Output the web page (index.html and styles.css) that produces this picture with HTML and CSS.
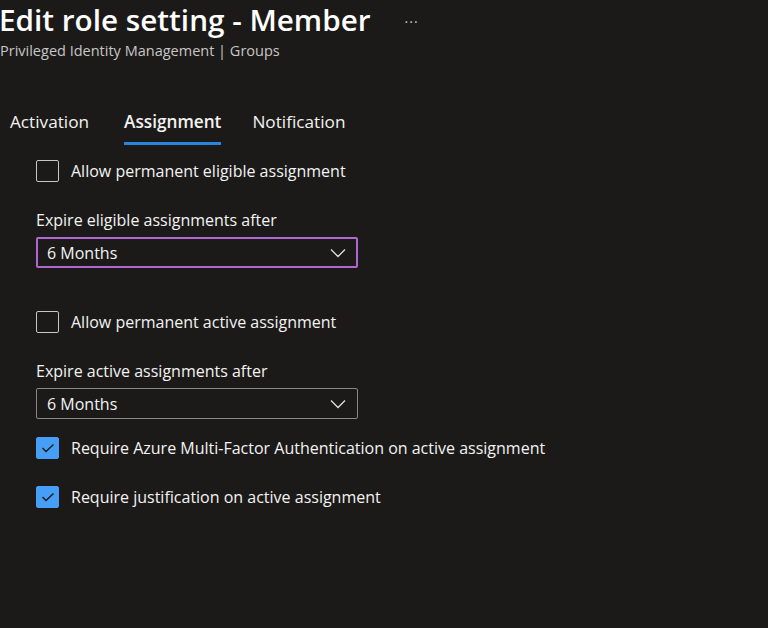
FILE: index.html
```html
<!DOCTYPE html>
<html lang="en">
    <head>
        <meta charset="UTF-8" />
        <meta name="viewport" content="width=device-width, initial-scale=1.0" />
        <title>Edit role setting - Member</title>
        <link rel="stylesheet" href="styles.css">
    </head>

    <body>
        <div class="blade">
            <div class="blade-header">
                <div class="title-row">
                    <h1 class="title">Edit role setting - Member</h1>
                    <span class="more">&middot;&middot;&middot;</span>
                </div>
                <div class="subtitle">Privileged Identity Management | Groups</div>
            </div>

            <div class="tabs">
                <span class="tab">Activation</span>
                <span class="tab selected">Assignment</span>
                <span class="tab">Notification</span>
            </div>

            <div class="settings">
                <label class="check">
                    <span class="box"></span>
                    <span>Allow permanent eligible assignment</span>
                </label>

                <div class="field">
                    <div class="field-label">Expire eligible assignments after</div>
                    <div class="dropdown focused">
                        <span>6 Months</span>
                        <svg class="chevron" width="16" height="10" viewBox="0 0 16 10">
                            <path d="M1 1.5 L8 8.5 L15 1.5" fill="none" stroke="#e1dfdd" stroke-width="1.3" />
                        </svg>
                    </div>
                </div>

                <label class="check">
                    <span class="box"></span>
                    <span>Allow permanent active assignment</span>
                </label>

                <div class="field last">
                    <div class="field-label">Expire active assignments after</div>
                    <div class="dropdown">
                        <span>6 Months</span>
                        <svg class="chevron" width="16" height="10" viewBox="0 0 16 10">
                            <path d="M1 1.5 L8 8.5 L15 1.5" fill="none" stroke="#e1dfdd" stroke-width="1.3" />
                        </svg>
                    </div>
                </div>

                <label class="check tight">
                    <span class="box checked">
                        <svg width="14" height="10" viewBox="0 0 14 10">
                            <path d="M1.5 5 L5 8.5 L12.5 1.5" fill="none" stroke="#1b1a19" stroke-width="1.4" />
                        </svg>
                    </span>
                    <span>Require Azure Multi-Factor Authentication on active assignment</span>
                </label>

                <label class="check">
                    <span class="box checked">
                        <svg width="14" height="10" viewBox="0 0 14 10">
                            <path d="M1.5 5 L5 8.5 L12.5 1.5" fill="none" stroke="#1b1a19" stroke-width="1.4" />
                        </svg>
                    </span>
                    <span>Require justification on active assignment</span>
                </label>
            </div>
        </div>
    </body>
</html>
```

FILE: styles.css
```css
html, body {
    margin: 0;
    padding: 0;
    background-color: #1b1a19;
}

.blade {
    font-family: 'Open Sans', 'Noto Sans', sans-serif;
    color: #f3f2f1;
    height: 628px;
    overflow: hidden;
}

.title-row {
    display: flex;
    align-items: center;
    gap: 34px;
    height: 40px;
}

.title {
    margin: 0;
    font-size: 29.7px;
    font-weight: 600;
    line-height: 40px;
    color: #ffffff;
    margin-left: -1px;
}

.more {
    font-size: 14px;
    color: #c8c6c4;
    letter-spacing: 1px;
    margin-top: 2px;
}

.subtitle {
    font-size: 14.5px;
    color: #c8c6c4;
    line-height: 20px;
    margin-top: 1px;
}

.tabs {
    display: flex;
    margin-top: 50px;
    padding-left: 10px;
}

.tab {
    font-size: 17.2px;
    line-height: 22px;
    padding-bottom: 9px;
    border-bottom: 3px solid transparent;
    margin-right: 31px;
}

.tab:first-child {
    margin-right: 35px;
}

.tab.selected {
    font-weight: 600;
    border-bottom-color: #2886de;
}

.settings {
    display: flex;
    flex-direction: column;
    padding-left: 36px;
    margin-top: 13px;
}

.check {
    display: flex;
    align-items: center;
    gap: 12px;
    font-size: 16px;
    height: 26px;
    margin-bottom: 25px;
}

.check.tight {
    margin-bottom: 23px;
}

.box {
    width: 21px;
    height: 20px;
    border: 1px solid #c8c6c4;
    border-radius: 2px;
    display: flex;
    align-items: center;
    justify-content: center;
    flex: none;
}

.box.checked {
    background-color: #479ef5;
    border-color: #479ef5;
}

.field {
    margin-bottom: 41px;
}

.field.last {
    margin-bottom: 16px;
}

.field-label {
    font-size: 16px;
    line-height: 22px;
    margin-bottom: 6px;
}

.dropdown {
    width: 322px;
    height: 31px;
    border: 1px solid #8a8886;
    border-radius: 2px;
    display: flex;
    align-items: center;
    justify-content: space-between;
    padding: 0 11px 0 10px;
    box-sizing: border-box;
    font-size: 16px;
}

.dropdown.focused {
    border: 2px solid #b067d2;
    padding: 0 10px 0 9px;
}

.chevron {
    flex: none;
}
```
